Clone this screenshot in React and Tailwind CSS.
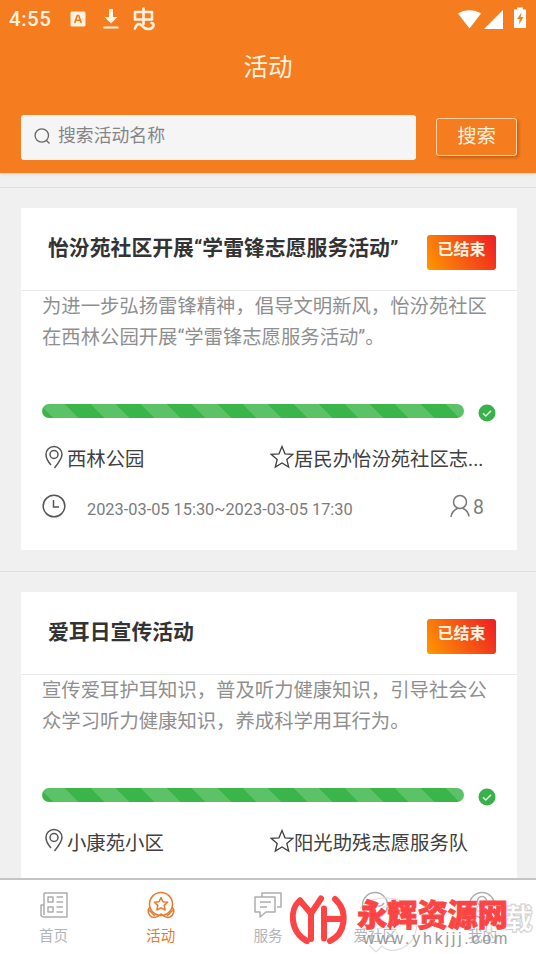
import React from "react";

const activities = [
  {
    id: 1,
    title: "怡汾苑社区开展“学雷锋志愿服务活动”",
    status: "已结束",
    lines: ["为进一步弘扬雷锋精神，倡导文明新风，怡汾苑社区", "在西林公园开展“学雷锋志愿服务活动”。"],
    place: "西林公园",
    team: "居民办怡汾苑社区志...",
    time: "2023-03-05 15:30~2023-03-05 17:30",
    people: 8,
  },
  {
    id: 2,
    title: "爱耳日宣传活动",
    status: "已结束",
    lines: ["宣传爱耳护耳知识，普及听力健康知识，引导社会公", "众学习听力健康知识，养成科学用耳行为。"],
    place: "小康苑小区",
    team: "阳光助残志愿服务队",
  },
];

function StatusBar() {
  return (
    <div className="flex h-[38px] items-center justify-between pl-[9px] pr-[10px] text-[#fff3e0]">
      <div className="flex items-center">
        <span className="w-[61px] text-[20.5px] font-medium tracking-[0.5px]">4:55</span>
        <svg width="16" height="16" viewBox="0 0 16 16" className="mr-[17px]">
          <rect x="0.5" y="0.5" width="15" height="15" rx="1.5" fill="currentColor" />
          <path d="M4.7 12 7.3 4.5h1.4l2.6 7.5M5.8 9.2h4.4" fill="none" stroke="#f57c1f" strokeWidth="1.6" />
        </svg>
        <svg width="16" height="22" viewBox="0 0 16 22" className="mr-[14px]" fill="currentColor">
          <path d="M6 1h4v8h4.500L8 15.500 1.500 9H6z" />
          <path d="M0.500 18.500h15v2h-15z" />
        </svg>
        <svg width="22" height="24" viewBox="0 0 22 24" fill="none" stroke="currentColor" strokeWidth="2.600" strokeLinecap="round" strokeLinejoin="round">
          <path d="M2 5h17v7.500H2zM10.500 1.500V17" />
          <path d="M2 21.500c1-4 3.500-5 5.500-4s3 4.500 7.500 4.500c6 0 7-5.500 3.500-6" />
        </svg>
      </div>
      <div className="flex items-center">
        <svg width="23" height="19" viewBox="0 0 23 19" fill="#fff">
          <path d="M0 3.500C6-1 17-1 23 3.500L11.500 18.500z" />
        </svg>
        <svg width="19" height="19" viewBox="0 0 19 19" fill="#fff" className="ml-[3px] mr-[11px]">
          <path d="M19 0v19H0z" />
        </svg>
        <svg width="12" height="21" viewBox="0 0 12 21" className="mb-[3px]">
          <path d="M3 0.500h6v2h3V21H0V2.500h3z" fill="#fff" />
          <path d="M7.500 5.500 3 12h2.700L5 17.500 9.500 10H6.600z" fill="#f57c1f" />
        </svg>
      </div>
    </div>
  );
}

function ActivityCard({ item }) {
  return (
    <div className="h-[383.5px] shrink-0 border-t border-[#dfdfdf] pl-[21px] pr-[19px] pt-5">
      <div className="h-[341.5px] bg-white">
        <div className="flex h-[83px] items-start justify-between border-b border-[#ebebeb] pl-[27px] pr-[21px]">
          <h2 className="mt-[24px] whitespace-nowrap text-[20.85px] font-bold leading-8 text-[#333]">{item.title}</h2>
          <span className="mt-[27px] h-[35px] w-[69px] shrink-0 rounded-[3px] bg-[linear-gradient(60deg,#ff9800,#ee1c25)] text-center text-[16px] font-bold leading-[30px] text-[#fff3e0]">
            {item.status}
          </span>
        </div>
        <div className="px-[21px]">
          <div className="h-[113px] whitespace-nowrap text-[19.35px] leading-[31px] text-[#8f8f8f]">
            {item.lines.map((line) => (
              <p key={line}>{line}</p>
            ))}
          </div>
          <div className="flex h-[15px] items-start justify-between">
            <div className="h-[14px] w-[422px] rounded-full bg-[repeating-linear-gradient(45deg,#39b54a_0px,#39b54a_8px,#5bc268_8px,#5bc268_25.960px,#39b54a_25.960px,#39b54a_35.920px)]" />
            <svg width="18" height="18" viewBox="0 0 18 18">
              <circle cx="9" cy="9" r="8.500" fill="#39b04a" />
              <path d="m5 9.200 2.800 2.700 5.300-5.200" fill="none" stroke="#d9f5dc" strokeWidth="1.400" />
            </svg>
          </div>
          <div className="mt-[25px] flex h-[32px] items-center text-[19.35px] text-[#404040]">
            <svg width="20" height="24" viewBox="0 0 20 24" fill="none" stroke="#555" strokeWidth="1.500" className="mb-[7px] ml-[2px] mr-[3px]">
              <path d="M7 20C3.500 16 2 12.500 2 9.500a8 8 0 0 1 16 0c0 4-4 9-7.500 13.500" />
              <circle cx="10" cy="9.500" r="4" />
            </svg>
            <span className="w-[203px]">{item.place}</span>
            <svg width="24" height="24" viewBox="0 0 24 24" fill="none" stroke="#404040" strokeWidth="1.300" className="mb-[6px]">
              <path d="m12 1.500 3 7.300 7.700.6-5.900 5 1.900 7.600L12 17.900 5.300 22l1.900-7.600-5.900-5 7.700-.6z" />
            </svg>
            <span className="whitespace-nowrap">{item.team}</span>
          </div>
          <div className="mt-[17px] flex h-[32px] items-center text-[#7c7c7c]">
            <svg width="24" height="24" viewBox="0 0 24 24" fill="none" stroke="#555" strokeWidth="1.500" className="mb-[6px]">
              <circle cx="12" cy="12" r="10.800" />
              <path d="M11.500 6v7H17" />
            </svg>
            <span className="ml-[21px] mt-[3px] w-[363px] whitespace-nowrap text-[16.350px]">{item.time}</span>
            <svg width="20" height="24" viewBox="0 0 20 24" fill="none" stroke="#777" strokeWidth="1.500" className="mb-[6px]">
              <circle cx="10" cy="8" r="6.500" />
              <path d="M1 23c.5-4.500 3-7 6.500-8.500M13 14.500c3.500 1.500 5.500 4 6 8" />
            </svg>
            <span className="mb-[3px] ml-[3px] text-[19.35px]">{item.people}</span>
          </div>
        </div>
      </div>
    </div>
  );
}

const tabs = [
  {
    name: "首页",
    icon: (
      <>
        <path d="M4 2h23v24H4c-2 0-3-.7-3-2V14h3M4 2v22" />
        <path d="M8 6h5v5H8zM8 16h5v5H8zM16.500 6H23M16.500 11H23M16.500 16H23M16.500 21H23" />
      </>
    ),
  },
  {
    name: "活动",
    active: true,
    icon: (
      <>
        <circle cx="14" cy="13" r="11.500" />
        <path d="m14 6.500 2 4.200 4.600.5-3.400 3.200.9 4.600-4.100-2.200-4.100 2.200.9-4.600-3.400-3.200 4.600-.5z" />
        <path d="M3 16c-3 3-2 8 2 10 4 1.500 7-1 9-3 2 2 5 4.500 9 3 4-2 5-7 2-10M2 19l6 6M26 19l-6 6" />
      </>
    ),
  },
  {
    name: "服务",
    icon: (
      <>
        <path d="M8 6V2h19v14h-4" />
        <path d="M1 6h20v15h-9l-6 5v-5H1zM6 11h11M6 16h7" />
      </>
    ),
  },
  {
    name: "爱社区",
    icon: (
      <>
        <circle cx="14" cy="14" r="12.500" />
        <path d="M5 13c4-4 6-3 9 0s6 3 9-1M14 13v12" />
      </>
    ),
  },
  {
    name: "我的",
    icon: (
      <>
        <circle cx="14" cy="14" r="12.500" />
        <circle cx="14" cy="10" r="4.500" />
        <path d="M6 23c1-5 4-7 8-7s7 2 8 7" />
      </>
    ),
  },
];

function Watermark() {
  return (
    <div className="absolute bottom-0 right-0 h-[72px] w-[250px]">
      <svg width="250" height="72" viewBox="0 0 250 72" fill="none" className="absolute inset-0">
        <path d="M74 27c8-12 31-15 45-5 17 12 15 37-5 45-8 3-15 1-18-3l-6 6-7-7" stroke="#ddd" strokeWidth="1.200" />
        <path d="M94 27c8-5 18-3 20 4s-5 11-13 13M92 47c8-3 18-1 20 6" stroke="#e2e2e2" strokeWidth="1.200" />
        <g stroke="#fb4545" strokeWidth="6" strokeLinecap="round" strokeLinejoin="round">
          <path d="M14 18.500C3 27 4 50 21 59" />
          <path d="m14 18.500 11 13 10-15M25 31.500V57" />
          <path d="M38 26.500v30M38 37h18" />
          <path d="M49 17c14 13 10 35-5 42" />
        </g>
      </svg>
      <span className="absolute right-[3px] top-[20px] text-[29px] font-black leading-9 text-white [-webkit-text-stroke:1px_#d0d0d0]">下载</span>
      <div className="absolute left-[71px] top-[16px] whitespace-nowrap text-[30.2px] font-black leading-[36px] text-[#fb4545] [-webkit-text-stroke:0.8px_#fb4545]">
        永辉资源网
      </div>
      <div className="absolute left-[77px] top-[47px] whitespace-nowrap font-['Liberation_Sans',sans-serif] text-[16px] leading-5 tracking-[2.750px] text-[#999]">
        www.yhkjjj.com
      </div>
    </div>
  );
}

export default function App() {
  return (
    <div className="relative flex h-[954px] w-[536px] flex-col overflow-hidden bg-[#f0f0f0] font-[Roboto,'Noto_Sans_CJK_SC',sans-serif]">
      <header className="h-[173px] shrink-0 bg-[#f57c1f] shadow-[0_1px_3px_rgba(0,0,0,0.15)]">
        <StatusBar />
        <h1 className="h-[77px] pt-[12px] text-center text-[24.5px] leading-9 text-[#fff3e0]">活动</h1>
        <div className="flex items-start pl-[21px]">
          <div className="flex h-[45px] w-[395px] shrink-0 items-center rounded-[3px] bg-[#f5f5f5] pl-[13px] text-[17.850px] text-[#858585]">
            <svg width="17" height="17" viewBox="0 0 17 17" fill="none" stroke="#666" strokeWidth="1.300" className="mb-[3px] mr-[7px]">
              <circle cx="7.800" cy="7.500" r="6.700" />
              <path d="m12.500 12.500 3 3" />
            </svg>
            <span className="mb-[3px]">搜索活动名称</span>
          </div>
          <button className="ml-[20px] mt-[3px] h-[38px] w-[81px] shrink-0 rounded-[3px] border border-[#ffd0a0] text-[19.35px] leading-none text-[#fff3e0] shadow-[2px_2px_3px_rgba(0,0,0,0.2)]">
            搜索
          </button>
        </div>
      </header>
      <main className="mt-[14px] flex min-h-0 flex-1 flex-col overflow-hidden">
        {activities.map((item) => (
          <ActivityCard key={item.id} item={item} />
        ))}
      </main>
      <nav className="grid h-[76px] shrink-0 grid-cols-5 border-t-2 border-[#c4c4c4] bg-white">
        {tabs.map((tab) => (
          <div key={tab.name} className={`flex flex-col items-center pt-[11px] ${tab.active ? "text-[#e87a2c]" : "text-[#b0b4bc]"}`}>
            <svg width="28" height="28" viewBox="0 0 28 28" fill="none" stroke={tab.active ? "#e87a2c" : "#adadad"} strokeWidth="1.500" strokeLinejoin="round">
              {tab.icon}
            </svg>
            <span className="mt-[7px] text-[14.500px] leading-[22px]">{tab.name}</span>
          </div>
        ))}
      </nav>
      <Watermark />
    </div>
  );
}
